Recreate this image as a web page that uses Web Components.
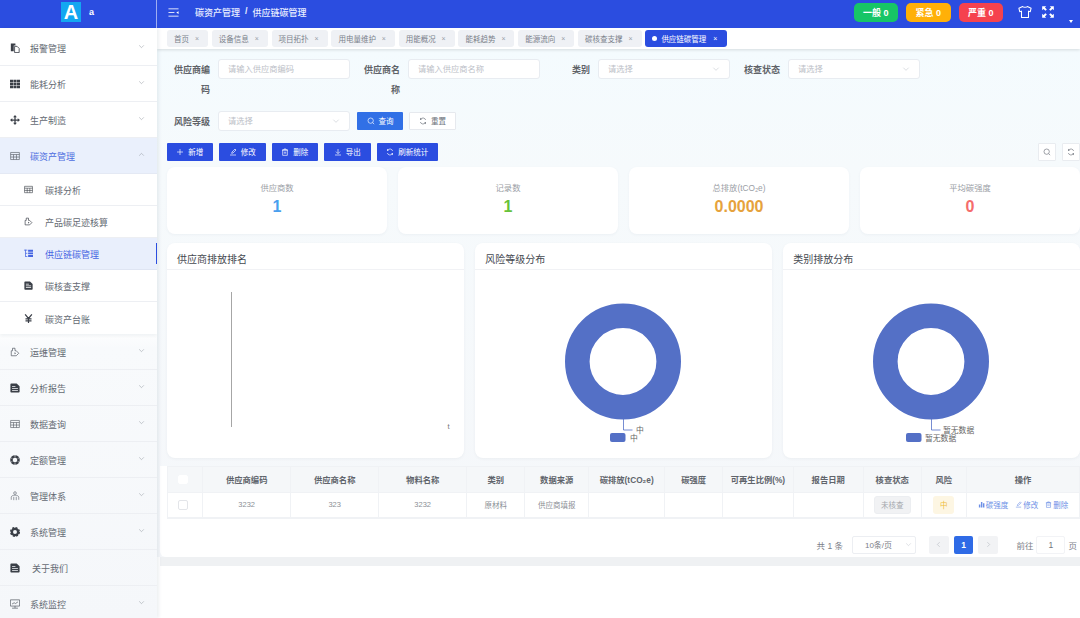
<!DOCTYPE html>
<html lang="zh">
<head>
<meta charset="utf-8">
<title>供应链碳管理</title>
<style>
  html, body { margin: 0; height: 100%; overflow: hidden; background: #fff; }
  body { font-family: "Liberation Sans", "Noto Sans CJK SC", sans-serif; }
</style>
</head>
<body>
<app-shell>
  <app-header slot="header"></app-header>
  <app-sidebar slot="side">
    <side-item icon="files" arrow="down">报警管理</side-item>
    <side-item icon="grid" arrow="down">能耗分析</side-item>
    <side-item icon="move" arrow="down">生产制造</side-item>
    <side-item icon="table" arrow="up" open>碳资产管理</side-item>
    <side-item icon="table" sub>碳排分析</side-item>
    <side-item icon="plug" sub>产品碳足迹核算</side-item>
    <side-item icon="tree" sub current>供应链碳管理</side-item>
    <side-item icon="doc" sub>碳核查支撑</side-item>
    <side-item icon="yen" sub last>碳资产台账</side-item>
    <side-item icon="plug" arrow="down">运维管理</side-item>
    <side-item icon="doc" arrow="down">分析报告</side-item>
    <side-item icon="table" arrow="down">数据查询</side-item>
    <side-item icon="ring" arrow="down">定额管理</side-item>
    <side-item icon="person" arrow="down">管理体系</side-item>
    <side-item icon="gear" arrow="down">系统管理</side-item>
    <side-item icon="doc" wide>关于我们</side-item>
    <side-item icon="monitor" arrow="down">系统监控</side-item>
  </app-sidebar>
  <tag-bar slot="tags">
    <tag-item>首页</tag-item>
    <tag-item>设备信息</tag-item>
    <tag-item>项目拓扑</tag-item>
    <tag-item>用电量维护</tag-item>
    <tag-item>用能概况</tag-item>
    <tag-item>能耗趋势</tag-item>
    <tag-item>能源流向</tag-item>
    <tag-item>碳核查支撑</tag-item>
    <tag-item active>供应链碳管理</tag-item>
  </tag-bar>
  <filter-form>
    <form-field label="供应商编码" placeholder="请输入供应商编码"></form-field>
    <form-field label="供应商名称" placeholder="请输入供应商名称"></form-field>
    <form-field label="类别" placeholder="请选择" select></form-field>
    <form-field label="核查状态" placeholder="请选择" select></form-field>
    <form-field label="风险等级" placeholder="请选择" select></form-field>
    <ui-button slot="actions" kind="query" icon="search">查询</ui-button>
    <ui-button slot="actions" kind="plain" icon="refresh">重置</ui-button>
  </filter-form>
  <tool-bar>
    <ui-button icon="plus">新增</ui-button>
    <ui-button icon="edit">修改</ui-button>
    <ui-button icon="trash">删除</ui-button>
    <ui-button icon="download">导出</ui-button>
    <ui-button icon="refresh">刷新统计</ui-button>
    <ui-button slot="right" kind="square" icon="search"></ui-button>
    <ui-button slot="right" kind="square" icon="refresh"></ui-button>
  </tool-bar>
  <stat-row>
    <stat-card label="供应商数" color="#4a9fee">1</stat-card>
    <stat-card label="记录数" color="#67c23a">1</stat-card>
    <stat-card label="总排放(tCO₂e)" color="#e6a23c">0.0000</stat-card>
    <stat-card label="平均碳强度" color="#f56c6c">0</stat-card>
  </stat-row>
  <chart-row>
    <chart-card heading="供应商排放排名"><bar-chart></bar-chart></chart-card>
    <chart-card heading="风险等级分布"><donut-chart label="中"></donut-chart></chart-card>
    <chart-card heading="类别排放分布"><donut-chart label="暂无数据"></donut-chart></chart-card>
  </chart-row>
  <table-panel>
    <data-table></data-table>
    <page-bar></page-bar>
  </table-panel>
</app-shell>

<script>
const ICONS = {
  files: '<path fill="currentColor" d="M2 1h11v5H9v14H2z"/><path fill="none" stroke="currentColor" stroke-width="2" d="M11 8h6l5 5v10H11z"/>',
  grid: '<path fill="currentColor" d="M0 2h7.300v6H0zM8.300 2h7.400v6H8.300zM16.700 2H24v6h-7.300zM0 9h7.300v6H0zM8.300 9h7.400v6H8.300zM16.700 9H24v6h-7.300zM0 16h7.300v6H0zM8.300 16h7.400v6H8.300zM16.700 16H24v6h-7.300z"/>',
  move: '<path fill="currentColor" d="M12 0l4.500 5.500H13.500V10.500h5V7.500L24 12l-5.500 4.500v-3h-5v5h3L12 24l-4.500-5.500h3v-5h-5v3L0 12l5.500-4.500v3h5v-5h-3z"/>',
  table: '<path fill="none" stroke="currentColor" stroke-width="1.600" d="M1.500 3.500h21v17h-21zM1.500 8.500h21M1.500 14.500h21M8.500 8.500v12M15.500 8.500v12"/>',
  plug: '<path fill="none" stroke="currentColor" stroke-width="1.800" stroke-linejoin="round" d="M3 9h3V3h6v6h3l6 6-6 6H3z"/><path fill="currentColor" d="M11 12.500l3.500 2.500-3.500 2.500z"/>',
  tree: '<path fill="none" stroke="currentColor" stroke-width="2" d="M4 2v19M0 3h9M4 11.500h5M4 20h5"/><path fill="currentColor" d="M11 2h13v5H11zM11 9h13v5H11zM11 16h13v5H11z"/>',
  doc: '<path fill="currentColor" fill-rule="evenodd" d="M3 1h13l7 7v13a2 2 0 0 1-2 2H3a2 2 0 0 1-2-2V3a2 2 0 0 1 2-2zM5 7v2h8V7zM5 12v2h14v-2zM5 16.500v2h14v-2z"/>',
  yen: '<path fill="none" stroke="currentColor" stroke-width="3.200" d="M3 1l9 11 9-11M12 12v12M4 13h16M4 18.500h16"/>',
  ring: '<circle cx="12" cy="12" r="8.500" fill="none" stroke="currentColor" stroke-width="6"/><path stroke="#f7f9fb" stroke-width="1.300" d="M12 0v6M23 6l-5 3M23 18l-5-3M12 24v-6M1 18l5-3M1 6l5 3"/>',
  person: '<circle cx="12" cy="5" r="3.200" fill="none" stroke="currentColor" stroke-width="1.500"/><path fill="none" stroke="currentColor" stroke-width="1.500" d="M3 21v-6c0-3 4-5 9-5s9 2 9 5v6M9 22v-8M15 22v-8"/>',
  gear: '<circle cx="12" cy="12" r="7.500" fill="none" stroke="currentColor" stroke-width="5.500"/><circle cx="12" cy="12" r="10.500" fill="none" stroke="currentColor" stroke-width="3" stroke-dasharray="5 3.250"/>',
  monitor: '<path fill="none" stroke="currentColor" stroke-width="1.800" d="M1 2h22v15H1zM12 17v4.500M5 22h14M5 12l5-3 3 2 6-4"/>',
  search: '<circle cx="11" cy="11" r="8" fill="none" stroke="currentColor" stroke-width="2"/><path stroke="currentColor" stroke-width="2" d="M17 17l4.500 4.500"/>',
  refresh: '<path fill="none" stroke="currentColor" stroke-width="2" d="M20 9a8.500 8.500 0 0 0-15-2.500M4 15a8.500 8.500 0 0 0 15 2.500"/><path fill="currentColor" d="M3 2.500l5.500 5.500H3zM21 21.500L15.500 16H21z"/>',
  plus: '<path stroke="currentColor" stroke-width="2" d="M12 3v18M3 12h18"/>',
  edit: '<path fill="none" stroke="currentColor" stroke-width="2" d="M8 16l1-4 9-9 3 3-9 9zM3 21h18"/>',
  trash: '<path fill="none" stroke="currentColor" stroke-width="2" d="M3 6h18M9 6V3h6v3M5 6h14v16H5zM10 11v6M14 11v6"/>',
  download: '<path fill="none" stroke="currentColor" stroke-width="2" d="M12 3v13M6 11l6 6 6-6M3 21h18"/>',
  bars: '<path fill="currentColor" d="M3 12h5v10H3zM10 3h5v19h-5zM17 8h5v14h-5z"/>',
  down: '<path fill="none" stroke="currentColor" stroke-width="1.700" d="M4 8l8 8 8-8"/>',
  up: '<path fill="none" stroke="currentColor" stroke-width="1.700" d="M4 16l8-8 8 8"/>',
  left: '<path fill="none" stroke="currentColor" stroke-width="2" d="M16 4l-8 8 8 8"/>',
  right: '<path fill="none" stroke="currentColor" stroke-width="2" d="M8 4l8 8-8 8"/>',
  menu: '<path stroke="currentColor" stroke-width="1.800" d="M1 4h22M1 12h13M1 20h22"/><path fill="currentColor" d="M23 9v6l-5-3z"/>',
  shirt: '<path fill="none" stroke="currentColor" stroke-width="1.800" stroke-linejoin="round" d="M8 2.500c1 2 7 2 8 0l6.500 3-1.500 6-3-1V21.500H6V10.500l-3 1-1.500-6z"/>',
  full: '<path fill="currentColor" d="M2 2h7L6.700 4.300 10 7.600 7.600 10 4.300 6.700 2 9zM22 2v7l-2.300-2.300L16.400 10 14 7.600l3.300-3.300L15 2zM2 22v-7l2.300 2.300L7.600 14 10 16.400l-3.300 3.300L9 22zM22 22h-7l2.300-2.300-3.300-3.300 2.400-2.400 3.300 3.300L22 15z"/>'
};
const svg = (name, size) => `<svg width="${size}" height="${size}" viewBox="0 0 24 24" aria-hidden="true">${ICONS[name]}</svg>`;

class AppShell extends HTMLElement {
  constructor() {
    super();
    this.attachShadow({mode: 'open'}).innerHTML = `
      <style>
        :host { display: grid; grid-template-columns: 157px 1fr; grid-template-rows: 28px 1fr; width: 1080px; height: 618px; overflow: hidden; }
        .head { grid-column: 1 / 3; }
        .side { min-height: 0; overflow: hidden; position: relative; z-index: 2; box-shadow: 2px 0 3px rgba(40,60,90,.08); }
        .main { min-width: 0; overflow: hidden; background: #fff; }
        .tags { position: relative; z-index: 1; box-shadow: 0 1px 3px rgba(0,0,0,.13); }
        .content {
          display: flex; flex-direction: column; padding: 9.500px 0 0 10px;
          background: linear-gradient(180deg, #f4fbfe 0, #f6fafc 120px, #f5f7fa 100%);
        }
        .tail { height: 9px; margin: 0 0 0 3px; background: #eff1f3; }
      </style>
      <div class="head"><slot name="header"></slot></div>
      <div class="side"><slot name="side"></slot></div>
      <div class="main">
        <div class="tags"><slot name="tags"></slot></div>
        <div class="content"><slot></slot></div>
        <div class="tail"></div>
      </div>`;
  }
}
customElements.define('app-shell', AppShell);

class AppHeader extends HTMLElement {
  constructor() {
    super();
    this.attachShadow({mode: 'open'}).innerHTML = `
      <style>
        :host { display: flex; height: 28px; background: #2b4de0; color: #fff; font-size: 9px; align-items: stretch; }
        .brand { width: 157px; box-sizing: border-box; border-right: 1px solid rgba(255,255,255,.55); display: flex; align-items: center; padding-left: 61px; gap: 8px; }
        .logo { width: 20px; height: 20px; margin-top: -4px; background: #13a7f1; font: bold 20px/20px "Liberation Sans", sans-serif; text-align: center; }
        .name { font-weight: bold; margin-top: -4px; }
        .bar { flex: 1; display: flex; align-items: center; padding: 0 0 4px 11px; min-width: 0; }
        .crumb { margin-left: 16px; font-weight: 500; color: #e9eeff; display: flex; gap: 5px; }
        .sep { font-weight: bold; }
        .badges { margin-left: auto; display: flex; gap: 8px; }
        .badge { width: 44.500px; height: 19px; border-radius: 5px; font-weight: bold; display: flex; align-items: center; justify-content: center; gap: 2.500px; }
        .icons { display: flex; align-items: center; gap: 9px; margin: 0 25px 0 15px; position: relative; }
        svg { display: block; }
        .caret { position: absolute; right: -18px; top: 15px; width: 0; height: 0; border: 2.500px solid transparent; border-top: 3px solid #fff; border-bottom: 0; }
      </style>
      <div class="brand"><div class="logo">A</div><div class="name">a</div></div>
      <div class="bar">
        ${svg('menu', 11)}
        <div class="crumb"><span>碳资产管理</span><span class="sep">/</span><span>供应链碳管理</span></div>
        <div class="badges">
          <div class="badge" style="background:#17c566">一般 0</div>
          <div class="badge" style="background:#ffb008">紧急 0</div>
          <div class="badge" style="background:#f5424e">严重 0</div>
        </div>
        <div class="icons">${svg('shirt', 14)}${svg('full', 14)}<i class="caret"></i></div>
      </div>`;
  }
}
customElements.define('app-header', AppHeader);

class AppSidebar extends HTMLElement {
  constructor() {
    super();
    this.attachShadow({mode: 'open'}).innerHTML = `
      <style>
        :host { display: flex; flex-direction: column; height: 590px; padding-top: 2px; box-sizing: border-box;
          background: linear-gradient(180deg, #fff 0, #fff 300px, #f8fafc 320px, #f5f7fa 100%); color: #5f6670; }
      </style>
      <slot></slot>`;
  }
}
customElements.define('app-sidebar', AppSidebar);

class SideItem extends HTMLElement {
  constructor() {
    super();
    const sub = this.hasAttribute('sub');
    const arrow = this.getAttribute('arrow');
    const icon = this.getAttribute('icon');
    this.attachShadow({mode: 'open'}).innerHTML = `
      <style>
        :host { display: flex; flex: none; align-items: center; height: 36px; box-sizing: border-box; padding: 2px 0 0 10px; font-size: 9px; color: #646a73; border-bottom: 1px solid #edeff3; position: relative; }
        :host([sub]) { height: 32px; padding-left: 24px; background: #fff; }
        :host([open]) { background: #eaf0fc; color: #4d6de0; border-bottom-color: #e4e9f4; }
        :host([current]) { background: #e9effc; color: #4565e2; border-bottom-color: #dfe5f3; }
        :host([current])::after { content: ""; position: absolute; right: 0; top: 5px; bottom: 5px; width: 1.500px; background: #2b4de0; }
        :host([last]) { box-shadow: 0 2px 3px rgba(40,60,90,.06); z-index: 1; border-bottom: 0; }
        .ic { width: 10px; height: 10px; margin-top: -2px; color: #3a3f47; flex: none; }
        :host([sub]) .ic { width: 9px; height: 9px; }
        :host([open]) .ic, :host([current]) .ic { color: #4565e2; }
        .ic svg { display: block; width: 100%; height: 100%; }
        .txt { margin-left: 10px; }
        :host([sub]) .txt { margin-left: 12px; }
        :host([wide]) .txt { margin-left: 12px; }
        .arr { position: absolute; right: 12px; top: 50%; margin-top: -4.500px; width: 7px; height: 7px; color: #8d939c; }
        .arr svg { display: block; width: 100%; height: 100%; }
      </style>
      <span class="ic" style="${['table', 'plug', 'person', 'monitor'].includes(icon) && !sub ? 'color:#5c626b' : ''}">${svg(icon, 24)}</span>
      <span class="txt"><slot></slot></span>
      ${arrow ? `<span class="arr">${svg(arrow, 24)}</span>` : ''}`;
  }
}
customElements.define('side-item', SideItem);

class TagBar extends HTMLElement {
  constructor() {
    super();
    this.attachShadow({mode: 'open'}).innerHTML = `
      <style>
        :host { display: flex; gap: 3.800px; height: 21px; box-sizing: border-box; padding: 2px 0 0 10px; background: #fff; }
      </style>
      <slot></slot>`;
  }
}
customElements.define('tag-bar', TagBar);

class TagItem extends HTMLElement {
  constructor() {
    super();
    this.attachShadow({mode: 'open'}).innerHTML = `
      <style>
        :host { display: flex; align-items: center; height: 17px; padding: 0 9px 0 7px; border-radius: 3px; background: #eff1f5; color: #7b818b; font-size: 7.500px; white-space: nowrap; }
        :host([active]) { background: #2b4de0; color: #fff; padding: 0 10px 0 7px; }
        .dot { display: none; width: 5px; height: 5px; border-radius: 50%; background: #fff; margin-right: 4px; }
        :host([active]) .dot { display: block; }
        .x { width: 10px; text-align: right; font-size: 7px; color: #9a9fa8; }
        :host([active]) .x { color: #fff; width: 11px; }
      </style>
      <i class="dot"></i><slot></slot><span class="x">×</span>`;
  }
}
customElements.define('tag-item', TagItem);

class FilterForm extends HTMLElement {
  constructor() {
    super();
    this.attachShadow({mode: 'open'}).innerHTML = `
      <style>
        :host { display: grid; grid-template-columns: repeat(4, 190px); row-gap: 12.500px; margin-left: 1px; }
        .actions { grid-column: 2 / 4; grid-row: 2; display: flex; align-items: center; gap: 6px; margin-left: -1px; height: 20px; }
      </style>
      <slot></slot>
      <div class="actions"><slot name="actions"></slot></div>`;
  }
}
customElements.define('filter-form', FilterForm);

class FormField extends HTMLElement {
  constructor() {
    super();
    const select = this.hasAttribute('select');
    this.attachShadow({mode: 'open'}).innerHTML = `
      <style>
        :host { display: flex; align-items: flex-start; width: 190px; }
        label { width: 42px; flex: none; font-size: 9px; font-weight: bold; line-height: 20px; padding-top: 1px; margin-bottom: -1px; color: #5f6368; text-align: right; margin-right: 8px; }
        .box { width: 132px; height: 20px; box-sizing: border-box; border: 1px solid #e8ecf1; border-radius: 3px; background: #fff; display: flex; align-items: center; justify-content: space-between; padding: 0 9px 0 9px; font-size: 8.250px; color: #bcc0c7; }
        .box span { margin-top: -2px; }
        .box svg { display: block; color: #c0c4cc; }
      </style>
      <label>${this.getAttribute('label')}</label>
      <div class="box"><span>${this.getAttribute('placeholder')}</span>${select ? svg('down', 8) : ''}</div>`;
  }
}
customElements.define('form-field', FormField);

class UiButton extends HTMLElement {
  constructor() {
    super();
    this.attachShadow({mode: 'open'}).innerHTML = `
      <style>
        :host { display: inline-flex; align-items: center; justify-content: center; gap: 4px; height: 18px; padding: 0 9.750px; box-sizing: border-box; background: #2b4de0; color: #fff; font-size: 7.500px; white-space: nowrap; border-radius: 1px; }
        :host([kind=query]) { background: #3170e6; width: 46px; padding: 0; height: 18.500px; }
        :host([kind=plain]) { background: #fff; color: #6a6f78; border: 1px solid #e6e9ee; width: 47px; padding: 0; }
        :host([kind=square]) { background: #fff; color: #6f747d; border: 1px solid #e9ecf0; width: 18px; padding: 0; gap: 0; }
        svg { display: block; }
        span { margin-top: -1px; }
      </style>
      ${svg(this.getAttribute('icon'), 8)}<span><slot></slot></span>`;
  }
}
customElements.define('ui-button', UiButton);

class ToolBar extends HTMLElement {
  constructor() {
    super();
    this.attachShadow({mode: 'open'}).innerHTML = `
      <style>
        :host { display: flex; justify-content: space-between; margin: 11.500px 0 6.500px -0.500px; }
        div { display: flex; gap: 6px; }
      </style>
      <div><slot></slot></div>
      <div><slot name="right"></slot></div>`;
  }
}
customElements.define('tool-bar', ToolBar);

class StatRow extends HTMLElement {
  constructor() {
    super();
    this.attachShadow({mode: 'open'}).innerHTML = `
      <style>:host { display: grid; grid-template-columns: repeat(4, 1fr); gap: 11px; }</style>
      <slot></slot>`;
  }
}
customElements.define('stat-row', StatRow);

class StatCard extends HTMLElement {
  constructor() {
    super();
    this.attachShadow({mode: 'open'}).innerHTML = `
      <style>
        :host { display: block; height: 67px; box-sizing: border-box; padding-top: 16px; background: #fff; border-radius: 8px; text-align: center; box-shadow: 0 1px 3px rgba(60,80,110,.05); }
        .label { font-size: 8.300px; line-height: 10px; color: #9a9ea5; }
        .val { margin-top: 4.500px; font-size: 16px; line-height: 18px; font-weight: bold; color: ${this.getAttribute('color')}; }
      </style>
      <div class="label">${this.getAttribute('label')}</div>
      <div class="val"><slot></slot></div>`;
  }
}
customElements.define('stat-card', StatCard);

class ChartRow extends HTMLElement {
  constructor() {
    super();
    this.attachShadow({mode: 'open'}).innerHTML = `
      <style>:host { display: grid; grid-template-columns: repeat(3, 1fr); gap: 11.500px; margin: 9px 0 7.500px; }</style>
      <slot></slot>`;
  }
}
customElements.define('chart-row', ChartRow);

class ChartCard extends HTMLElement {
  constructor() {
    super();
    this.attachShadow({mode: 'open'}).innerHTML = `
      <style>
        :host { display: block; height: 215px; background: #fff; border-radius: 8px; overflow: hidden; box-shadow: 0 1px 3px rgba(60,80,110,.06); }
        h3 { margin: 0; height: 27px; box-sizing: border-box; border-bottom: 1px solid #f1f2f5; padding-left: 10px; font-size: 10px; font-weight: 400; line-height: 33px; color: #45494f; }
      </style>
      <h3>${this.getAttribute('heading')}</h3>
      <slot></slot>`;
  }
}
customElements.define('chart-card', ChartCard);

class BarChart extends HTMLElement {
  constructor() {
    super();
    this.attachShadow({mode: 'open'}).innerHTML = `
      <style>:host { display: block; } svg { display: block; }</style>
      <svg width="297" height="188">
        <path d="M64.500 22v135" stroke="#a6a6a6" fill="none"/>
        <text x="280.500" y="159" font-size="7.500" fill="#777">t</text>
      </svg>`;
  }
}
customElements.define('bar-chart', BarChart);

class DonutChart extends HTMLElement {
  constructor() {
    super();
    const label = this.getAttribute('label');
    const one = label.length === 1;
    this.attachShadow({mode: 'open'}).innerHTML = `
      <style>
        :host { display: block; } svg { display: block; }
        text { font-family: "Liberation Sans", "Noto Sans CJK SC", sans-serif; font-size: 7.800px; fill: #666; }
      </style>
      <svg width="297" height="188">
        <circle cx="148" cy="91.500" r="45.700" fill="none" stroke="#5470c6" stroke-width="24.600"/>
        <path d="M148.500 149v11h9" fill="none" stroke="#5470c6" stroke-width=".8"/>
        <text x="${one ? 161 : 160}" y="163">${label}</text>
        <rect x="${one ? 135 : 123}" y="163" width="15.500" height="9" rx="2" fill="#5470c6"/>
        <text x="${one ? 155 : 142}" y="170.500">${label}</text>
      </svg>`;
  }
}
customElements.define('donut-chart', DonutChart);

class TablePanel extends HTMLElement {
  constructor() {
    super();
    this.attachShadow({mode: 'open'}).innerHTML = `
      <style>:host { display: block; margin-left: -7px; padding-left: 6.500px; background: #fff; border-radius: 0 0 0 6px; }</style>
      <slot></slot>`;
  }
}
customElements.define('table-panel', TablePanel);

class DataTable extends HTMLElement {
  constructor() {
    super();
    const cols = [35.7, 88, 88, 88, 58, 64, 76, 58, 70.5, 70, 58, 45, 113.8];
    const heads = ['', '供应商编码', '供应商名称', '物料名称', '类别', '数据来源', '碳排放(tCO₂e)', '碳强度', '可再生比例(%)', '报告日期', '核查状态', '风险', '操作'];
    const cells = ['', '3232', '323', '3232', '原材料', '供应商填报', '', '', '', '',
      '<span class="tag grey">未核查</span>', '<span class="tag warn">中</span>',
      `<span class="ops"><a>${svg('bars', 7)}碳强度</a><a>${svg('edit', 7)}修改</a><a>${svg('trash', 7)}删除</a></span>`];
    const check = '<i class="check"></i>';
    this.attachShadow({mode: 'open'}).innerHTML = `
      <style>
        :host { display: block; }
        table { border-collapse: collapse; table-layout: fixed; width: 912.800px; }
        th, td { padding: 0; text-align: center; height: 26px; box-sizing: border-box; border: 1px solid #f0f2f5; white-space: nowrap; overflow: hidden; }
        th { background: #f5f7f9; font-size: 8.300px; font-weight: bold; color: #60646b; }
        td { background: #fff; font-size: 7.500px; color: #8b8f96; border-bottom-width: 2px; }
        th:first-child, td:first-child { padding-right: 4px; }
        .check { display: inline-block; width: 9.500px; height: 9.500px; box-sizing: border-box; border: 1px solid #e3e5e9; border-radius: 2px; background: #fff; vertical-align: middle; }
        th .check { border-color: #fff; }
        .tag { display: inline-flex; align-items: center; justify-content: center; height: 18px; border-radius: 3px; }
        .grey { width: 37px; background: #f1f2f4; color: #a5a8ae; border: 1px solid #eceef1; box-sizing: border-box; }
        .warn { width: 21px; background: #fdf6e3; color: #eebd3d; }
        .ops { display: flex; justify-content: center; gap: 7px; color: #6d8fe6; }
        .ops a { display: inline-flex; align-items: center; gap: 1px; }
        svg { display: block; }
      </style>
      <table>
        <colgroup>${cols.map(w => `<col style="width:${w}px">`).join('')}</colgroup>
        <tr>${heads.map((h, i) => `<th>${i ? h : check}</th>`).join('')}</tr>
        <tr>${cells.map((c, i) => `<td>${i ? c : check}</td>`).join('')}</tr>
      </table>`;
  }
}
customElements.define('data-table', DataTable);

class PageBar extends HTMLElement {
  constructor() {
    super();
    this.attachShadow({mode: 'open'}).innerHTML = `
      <style>
        :host { display: flex; justify-content: flex-end; align-items: center; height: 18px; padding: 16.500px 3px 3.500px 0; font-size: 8.500px; color: #7c8088; }
        .box { display: flex; align-items: center; justify-content: center; height: 18px; box-sizing: border-box; border-radius: 2px; flex: none; }
        .size { width: 64px; justify-content: space-between; padding: 0 3px 0 12px; border: 1px solid #eceef2; margin: 0 13px 0 9px; color: #7c8088; font-size: 8px; }
        .size svg { color: #c0c4cc; }
        .nav { width: 20px; background: #f2f3f5; color: #b4b8bf; }
        .cur { width: 19.500px; margin: 0 5px; background: #2f6be6; color: #fff; font-weight: bold; }
        .go { margin-left: 18px; }
        .num { width: 29px; margin: 0 3px; border: 1px solid #f2f3f6; color: #70747b; }
        svg { display: block; }
      </style>
      <span>共 1 条</span>
      <div class="box size"><span>10条/页</span>${svg('down', 7)}</div>
      <div class="box nav">${svg('left', 7)}</div>
      <div class="box cur">1</div>
      <div class="box nav">${svg('right', 7)}</div>
      <span class="go">前往</span>
      <div class="box num">1</div>
      <span>页</span>`;
  }
}
customElements.define('page-bar', PageBar);
</script>
</body>
</html>
